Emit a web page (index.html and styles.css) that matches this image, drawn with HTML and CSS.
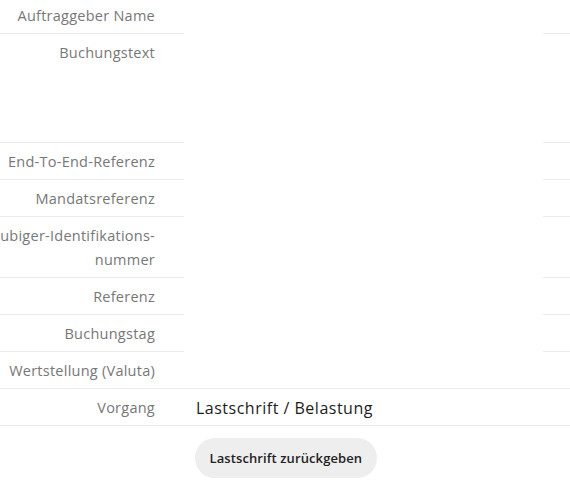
FILE: index.html
```html
<!DOCTYPE html>
<html lang="de">
<head>
<meta charset="utf-8">
<link rel="stylesheet" href="styles.css">
</head>
<body>
<div class="details">
  <div class="row">
    <div class="label">Auftraggeber Name</div>
    <div class="value empty"></div>
    <div class="aside"></div>
  </div>
  <div class="row tall">
    <div class="label">Buchungstext</div>
    <div class="value empty"></div>
    <div class="aside"></div>
  </div>
  <div class="row">
    <div class="label">End-To-End-Referenz</div>
    <div class="value empty"></div>
    <div class="aside"></div>
  </div>
  <div class="row">
    <div class="label">Mandatsreferenz</div>
    <div class="value empty"></div>
    <div class="aside"></div>
  </div>
  <div class="row">
    <div class="label">Gläubiger-Identifikations-<br>nummer</div>
    <div class="value empty"></div>
    <div class="aside"></div>
  </div>
  <div class="row">
    <div class="label">Referenz</div>
    <div class="value empty"></div>
    <div class="aside"></div>
  </div>
  <div class="row">
    <div class="label">Buchungstag</div>
    <div class="value empty"></div>
    <div class="aside"></div>
  </div>
  <div class="row">
    <div class="label">Wertstellung (Valuta)</div>
    <div class="value"></div>
    <div class="aside"></div>
  </div>
  <div class="row">
    <div class="label">Vorgang</div>
    <div class="value">Lastschrift / Belastung</div>
    <div class="aside"></div>
  </div>
  <div class="actions">
    <div class="spacer"></div>
    <div class="buttons">
      <button class="btn" type="button">Lastschrift zurückgeben</button>
    </div>
  </div>
</div>
</body>
</html>
```
FILE: styles.css
```css
html, body {
  margin: 0;
  padding: 0;
  background: #ffffff;
  overflow: hidden;
}

body {
  font-family: "Open Sans", "Noto Sans", sans-serif;
  color: #1f1f1f;
}

.details {
  width: 596px;
  margin-top: -3px;
  margin-left: -30px;
}

.row {
  display: grid;
  grid-template-columns: 214px 359px 27px;
}

.row.tall {
  min-height: 109px;
}

.label {
  padding: 7px 29px 5px 0;
  text-align: right;
  font-size: 14.5px;
  line-height: 24px;
  letter-spacing: 0.25px;
  color: #777777;
  border-bottom: 1px solid #ebebeb;
  white-space: nowrap;
}

.value {
  padding: 7px 12px 5px;
  font-size: 16px;
  line-height: 24px;
  letter-spacing: 0.5px;
  color: #1c1c1c;
  border-bottom: 1px solid #ebebeb;
}

.value.empty {
  border-bottom-color: transparent;
}

.aside {
  border-bottom: 1px solid #ebebeb;
}

.actions {
  display: grid;
  grid-template-columns: 214px 386px;
  padding-top: 12px;
}

.buttons {
  padding-left: 11px;
}

.btn {
  height: 40px;
  padding: 0 14.5px;
  border: none;
  border-radius: 20px;
  background: #eeeeee;
  font-family: "Open Sans", "Noto Sans", sans-serif;
  font-size: 13px;
  font-weight: 600;
  letter-spacing: 0.1px;
  color: #222222;
}
```
